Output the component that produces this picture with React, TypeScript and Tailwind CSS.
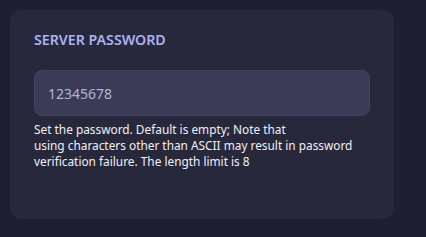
export default function App() {
  return (
    <div className="w-[426px] h-[237px] bg-[#1e1f31] pt-[10px] pl-[10px]" style={{ fontFamily: '"Noto Sans", "Open Sans", sans-serif' }}>
      <div className="w-[384px] h-[209px] bg-[#28283d] rounded-xl px-6 pt-[20px]">
        <div className="text-[14.2px] leading-[20px] font-semibold text-[#aab3f2]">SERVER PASSWORD</div>
        <div className="mt-[20px] h-[46px] w-[336px] rounded-lg bg-[#3b3b58] border border-[#43435f] flex items-center px-[13px]">
          <span className="text-[14px] text-[#b4b4cc]">12345678</span>
        </div>
        <div className="mt-[5px] text-[11.85px] leading-[16px] text-[#f0f0f5]">
          Set the password. Default is empty; Note that
          <br />
          using characters other than ASCII may result in password verification failure. The length limit is 8
        </div>
      </div>
    </div>
  );
}
